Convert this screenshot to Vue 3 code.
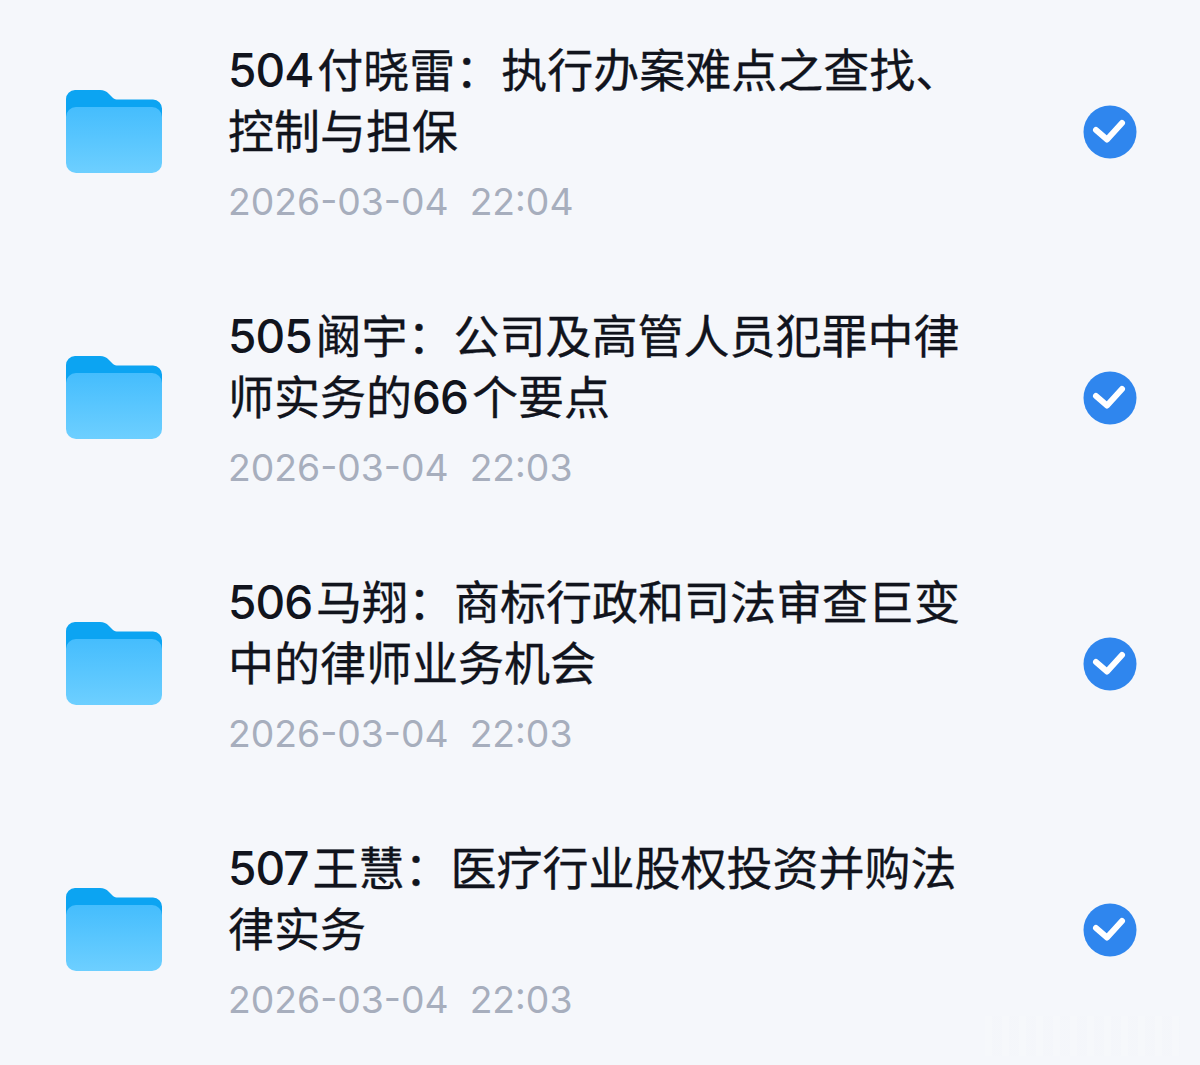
<template>
  <div class="page">
    <div class="file-row" v-for="item in files" :key="item.no">
      <svg class="folder" viewBox="0 0 96 84" aria-hidden="true">
        <defs>
          <linearGradient id="folderFront" x1="0" y1="0" x2="0" y2="1">
            <stop offset="0" stop-color="#45bdfd" />
            <stop offset="1" stop-color="#6dcfff" />
          </linearGradient>
        </defs>
        <path d="M0 10a9 9 0 0 1 9-9h25c4 0 6 1 9 4l4 4c1.500 1 3 1.500 5 1.500h35a9 9 0 0 1 9 9v30H0z" fill="#0ca4f2" />
        <path d="M0 28a10 10 0 0 1 10-10h76a10 10 0 0 1 10 10v46a10 10 0 0 1-10 10H10A10 10 0 0 1 0 74z" fill="url(#folderFront)" />
      </svg>
      <div class="info">
        <div class="title">
          <template v-for="(part, i) in splitDigits(item.title)" :key="i">
            <span v-if="/\d/.test(part)" class="num">{{ part }}</span>
            <template v-else>{{ part }}</template>
          </template>
        </div>
        <div class="date">{{ item.date }}</div>
      </div>
      <svg class="check" viewBox="0 0 54 54" aria-hidden="true">
        <circle cx="27" cy="27" r="26.500" fill="#2f86ee" />
        <path d="M13 25l11 9.500L39 18" fill="none" stroke="#fff" stroke-width="6" stroke-linecap="round" stroke-linejoin="round" />
      </svg>
    </div>
    <div class="watermark"></div>
  </div>
</template>

<script setup>
const files = [
  { no: '504', title: '504付晓雷：执行办案难点之查找、控制与担保', date: '2026-03-04  22:04' },
  { no: '505', title: '505阚宇：公司及高管人员犯罪中律师实务的66个要点', date: '2026-03-04  22:03' },
  { no: '506', title: '506马翔：商标行政和司法审查巨变中的律师业务机会', date: '2026-03-04  22:03' },
  { no: '507', title: '507王慧：医疗行业股权投资并购法律实务', date: '2026-03-04  22:03' }
]

const splitDigits = (text) => text.split(/(\d+)/).filter(Boolean)
</script>

<style>
body {
  background: #f5f7fb;
}
</style>

<style scoped>
.page {
  position: relative;
  height: 1065px;
  overflow: hidden;
  background: #f5f7fb;
  display: flex;
  flex-direction: column;
  gap: 2px;
  font-family: "Noto Sans CJK SC", "Noto Sans", sans-serif;
}

.file-row {
  height: 264px;
  flex: none;
  display: flex;
  align-items: center;
  padding: 0 63px 0 66px;
}

.folder {
  width: 96px;
  height: 84px;
  flex: none;
  margin-bottom: 2px;
}

.info {
  width: 738px;
  margin-left: 66px;
}

.title {
  font-size: 46px;
  line-height: 61px;
  font-weight: 400;
  color: #11141d;
  -webkit-text-stroke: 0.3px #11141d;
}

.num {
  font-family: Inter, "Noto Sans", sans-serif;
  line-height: 0;
  letter-spacing: -1px;
  margin-right: 4px;
  -webkit-text-stroke: 0;
  font-weight: 500;
}

.date {
  margin-top: 18px;
  font-family: Inter, "Noto Sans", sans-serif;
  font-size: 37.300px;
  line-height: 50px;
  color: #a7aebd;
  white-space: pre;
}

.check {
  width: 54px;
  height: 54px;
  margin-left: auto;
  flex: none;
}

.watermark {
  position: absolute;
  left: 985px;
  top: 1016px;
  width: 195px;
  height: 40px;
  background: repeating-linear-gradient(90deg, rgba(255, 255, 255, 0.12) 0 7px, rgba(238, 240, 245, 0.08) 7px 17px);
}
</style>
